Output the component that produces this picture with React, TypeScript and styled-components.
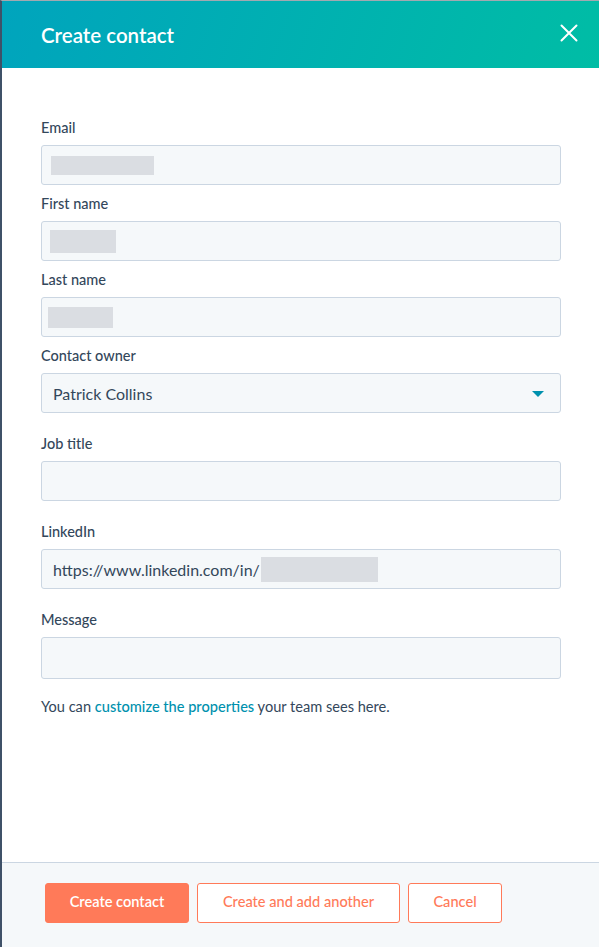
import React from "react";
import styled, { createGlobalStyle } from "styled-components";

const Global = createGlobalStyle`
  html, body { margin: 0; padding: 0; background: #fff; }
  body { font-family: Lato, "Open Sans", sans-serif; color: #33475b; }
  * { box-sizing: border-box; }
`;

const Panel = styled.div`
  width: 599px;
  height: 947px;
  display: flex;
  flex-direction: column;
  border-top: 1px solid #a3a9b0;
  border-left: 2px solid #3f5168;
  background: #fff;
`;

const Header = styled.header`
  height: 67px;
  flex: none;
  display: flex;
  align-items: center;
  justify-content: space-between;
  padding: 0 20px 0 39px;
  background: linear-gradient(-70deg, #00bda5 0%, #00a4bd 100%);
`;

const Title = styled.h1`
  margin: 0;
  font-size: 20.5px;
  font-weight: 600;
  color: #fff;
`;

const CloseButton = styled.button`
  border: none;
  background: none;
  padding: 0;
  width: 20px;
  height: 20px;
  display: flex;
  align-items: center;
  justify-content: center;
  cursor: pointer;
  margin-top: -3px;
`;

const Body = styled.div`
  flex: 1;
  padding: 51px 38px 0 39px;
  display: flex;
  flex-direction: column;
`;

const Field = styled.div<{ $gap: number }>`
  display: flex;
  flex-direction: column;
  margin-bottom: ${(p) => p.$gap}px;
`;

const Label = styled.label`
  font-size: 14.5px;
  font-weight: 500;
  line-height: 18px;
  margin-bottom: 8px;
  color: #33475b;
`;

const Input = styled.div<{ $h?: number }>`
  height: ${(p) => p.$h ?? 40}px;
  border: 1px solid #cbd6e2;
  border-radius: 3px;
  background: #f5f8fa;
  display: flex;
  align-items: center;
  padding: 0 12px 0 11px;
  font-size: 16px;
  color: #33475b;
`;

const Redacted = styled.span<{ $w: number; $h: number; $ml: number }>`
  display: inline-block;
  width: ${(p) => p.$w}px;
  height: ${(p) => p.$h}px;
  margin-left: ${(p) => p.$ml}px;
  background: #dadde2;
`;

const Caret = styled.span`
  margin-left: auto;
  margin-right: 4px;
  margin-top: 1px;
  width: 0;
  height: 0;
  border-left: 6px solid transparent;
  border-right: 6px solid transparent;
  border-top: 6px solid #0091ae;
`;

const Help = styled.p`
  margin: 0;
  font-size: 14.6px;
  line-height: 20px;
  color: #33475b;
`;

const Link = styled.a`
  color: #0091ae;
  text-decoration: none;
  font-weight: 500;
`;

const Footer = styled.footer`
  flex: none;
  height: 85px;
  border-top: 1px solid #cbd6e2;
  background: #f5f8fa;
  display: flex;
  align-items: flex-start;
  gap: 8px;
  padding: 20px 0 0 43px;
`;

const Button = styled.button<{ $primary?: boolean; $w: number }>`
  height: 40px;
  width: ${(p) => p.$w}px;
  border-radius: 3px;
  border: 1px solid #ff7a59;
  background: ${(p) => (p.$primary ? "#ff7a59" : "#fff")};
  color: ${(p) => (p.$primary ? "#fff" : "#ff7a59")};
  font-family: Lato, "Open Sans", sans-serif;
  font-size: 14.6px;
  font-weight: ${(p) => (p.$primary ? 600 : 500)};
  padding: 0 0 3px;
  cursor: pointer;
`;

export default function App() {
  return (
    <>
      <Global />
      <Panel>
        <Header>
          <Title>Create contact</Title>
          <CloseButton aria-label="Close">
            <svg width="18" height="18" viewBox="0 0 18 18">
              <path d="M1.5 1.5 L16.5 16.5 M16.5 1.5 L1.5 16.5" stroke="#fff" strokeWidth="2" strokeLinecap="round" />
            </svg>
          </CloseButton>
        </Header>
        <Body>
          <Field $gap={10}>
            <Label>Email</Label>
            <Input>
              <Redacted $w={103} $h={19} $ml={-2} />
            </Input>
          </Field>
          <Field $gap={10}>
            <Label>First name</Label>
            <Input>
              <Redacted $w={66} $h={23} $ml={-3} />
            </Input>
          </Field>
          <Field $gap={10}>
            <Label>Last name</Label>
            <Input>
              <Redacted $w={65} $h={21} $ml={-5} />
            </Input>
          </Field>
          <Field $gap={22}>
            <Label>Contact owner</Label>
            <Input>
              Patrick Collins
              <Caret />
            </Input>
          </Field>
          <Field $gap={22}>
            <Label>Job title</Label>
            <Input />
          </Field>
          <Field $gap={22}>
            <Label>LinkedIn</Label>
            <Input>
              https://www.linkedin.com/in/
              <Redacted $w={117} $h={25} $ml={1} />
            </Input>
          </Field>
          <Field $gap={18}>
            <Label>Message</Label>
            <Input $h={42} />
          </Field>
          <Help>
            You can <Link href="#">customize the properties</Link> your team sees here.
          </Help>
        </Body>
        <Footer>
          <Button $primary $w={144}>Create contact</Button>
          <Button $w={203}>Create and add another</Button>
          <Button $w={94}>Cancel</Button>
        </Footer>
      </Panel>
    </>
  );
}
